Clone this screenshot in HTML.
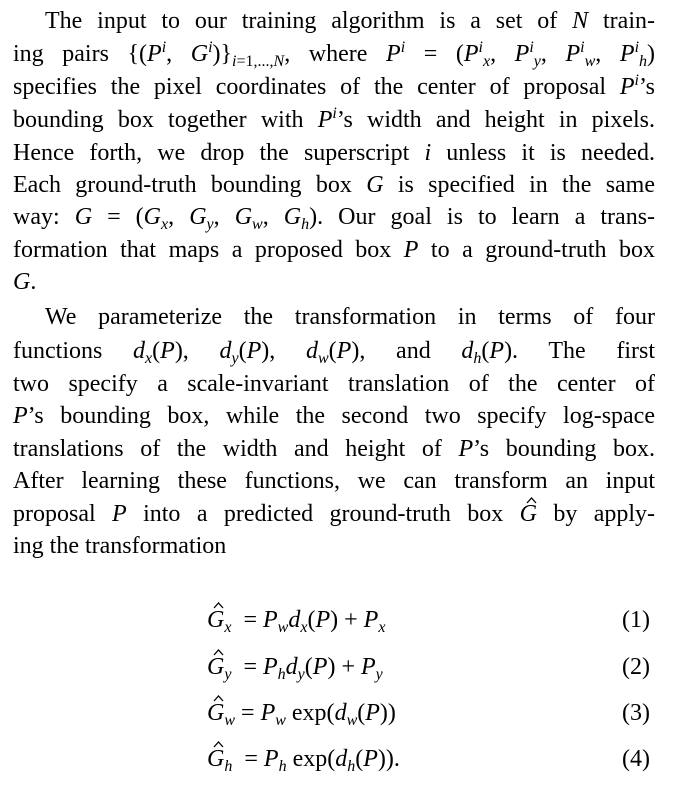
<!DOCTYPE html>
<html><head><meta charset="utf-8">
<style>
html,body{margin:0;padding:0;background:#fff;}
body{width:680px;height:792px;position:relative;overflow:hidden;font-family:"Liberation Serif",serif;color:#000;font-size:24px;}
.l{position:absolute;left:13px;width:642px;height:30px;line-height:30px;text-align:justify;text-align-last:justify;white-space:nowrap;}
.l.ind{left:45px;width:610px;}
.l.nj{text-align-last:left;text-align:left;}
i{font-style:italic;}
sub,sup{font-size:16px;line-height:0;}
sub{vertical-align:-5px;}
sup{vertical-align:9px;}
.eq{position:absolute;height:32px;line-height:32px;white-space:nowrap;}
.num{position:absolute;left:622px;height:32px;line-height:32px;}
.hat{position:relative;display:inline-block;}
.hat svg{position:absolute;left:6px;top:-2px;width:11px;height:7px;}
</style></head><body>
<div class="l ind" style="top:6px">The input to our training algorithm is a set of <i>N</i> train-</div>
<div class="l" style="top:39px">ing pairs {(<i>P<sup>i</sup></i>, <i>G<sup>i</sup></i>)}<sub><i>i</i>=1,...,<i>N</i></sub>, where <i>P<sup>i</sup></i> = (<i>P<sup>i</sup><sub>x</sub></i>, <i>P<sup>i</sup><sub>y</sub></i>, <i>P<sup>i</sup><sub>w</sub></i>, <i>P<sup>i</sup><sub>h</sub></i>)</div>
<div class="l" style="top:72px">specifies the pixel coordinates of the center of proposal <i>P<sup>i</sup></i>’s</div>
<div class="l" style="top:105px">bounding box together with <i>P<sup>i</sup></i>’s width and height in pixels.</div>
<div class="l" style="top:138px">Hence forth, we drop the superscript <i>i</i> unless it is needed.</div>
<div class="l" style="top:170px">Each ground-truth bounding box <i>G</i> is specified in the same</div>
<div class="l" style="top:202px">way: <i>G</i> = (<i>G<sub>x</sub></i>, <i>G<sub>y</sub></i>, <i>G<sub>w</sub></i>, <i>G<sub>h</sub></i>). Our goal is to learn a trans-</div>
<div class="l" style="top:235px">formation that maps a proposed box <i>P</i> to a ground-truth box</div>
<div class="l nj" style="top:267px"><i>G</i>.</div>
<div class="l ind" style="top:302px">We parameterize the transformation in terms of four</div>
<div class="l" style="top:336px">functions <i>d<sub>x</sub></i>(<i>P</i>), <i>d<sub>y</sub></i>(<i>P</i>), <i>d<sub>w</sub></i>(<i>P</i>), and <i>d<sub>h</sub></i>(<i>P</i>). The first</div>
<div class="l" style="top:369px">two specify a scale-invariant translation of the center of</div>
<div class="l" style="top:401px"><i>P</i>’s bounding box, while the second two specify log-space</div>
<div class="l" style="top:434px">translations of the width and height of <i>P</i>’s bounding box.</div>
<div class="l" style="top:466px">After learning these functions, we can transform an input</div>
<div class="l" style="top:499px">proposal <i>P</i> into a predicted ground-truth box <i class="hat">G<svg viewBox="0 0 11 7"><path d="M1 6 L5.5 1 L10 6" fill="none" stroke="#000" stroke-width="1.3"/></svg></i> by apply-</div>
<div class="l nj" style="top:531px">ing the transformation</div>

<div class="eq" style="left:207px;top:604px"><i class="hat">G<svg viewBox="0 0 11 7"><path d="M1 6 L5.5 1 L10 6" fill="none" stroke="#000" stroke-width="1.3"/></svg></i><sub><i>x</i></sub> &nbsp;= <i>P<sub>w</sub>d<sub>x</sub></i>(<i>P</i>) + <i>P<sub>x</sub></i></div>
<div class="num" style="top:604px">(1)</div>
<div class="eq" style="left:207px;top:651px"><i class="hat">G<svg viewBox="0 0 11 7"><path d="M1 6 L5.5 1 L10 6" fill="none" stroke="#000" stroke-width="1.3"/></svg></i><sub><i>y</i></sub> &nbsp;= <i>P<sub>h</sub>d<sub>y</sub></i>(<i>P</i>) + <i>P<sub>y</sub></i></div>
<div class="num" style="top:651px">(2)</div>
<div class="eq" style="left:207px;top:697px"><i class="hat">G<svg viewBox="0 0 11 7"><path d="M1 6 L5.5 1 L10 6" fill="none" stroke="#000" stroke-width="1.3"/></svg></i><sub><i>w</i></sub> = <i>P<sub>w</sub></i> exp(<i>d<sub>w</sub></i>(<i>P</i>))</div>
<div class="num" style="top:697px">(3)</div>
<div class="eq" style="left:207px;top:743px"><i class="hat">G<svg viewBox="0 0 11 7"><path d="M1 6 L5.5 1 L10 6" fill="none" stroke="#000" stroke-width="1.3"/></svg></i><sub><i>h</i></sub> &nbsp;= <i>P<sub>h</sub></i> exp(<i>d<sub>h</sub></i>(<i>P</i>)).</div>
<div class="num" style="top:743px">(4)</div>
</body></html>
